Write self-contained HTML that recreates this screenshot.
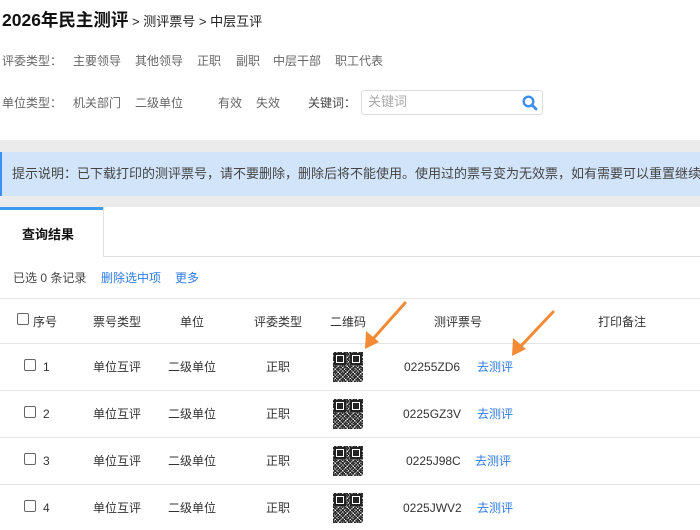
<!DOCTYPE html>
<html><head><meta charset="utf-8"><style>
*{margin:0;padding:0;box-sizing:border-box}
body{width:700px;height:530px;overflow:hidden;background:#fff;font-family:"Liberation Sans","Noto Sans CJK SC",sans-serif;font-size:12px;color:#333;position:relative}
.a{position:absolute;white-space:nowrap;line-height:16px}
.g{color:#666}
.blue{color:#2f7be8}
.qr{position:absolute;width:30px;height:30px;background:
repeating-conic-gradient(#222 0 25%,transparent 0 50%) 0 0/3px 3px,
repeating-conic-gradient(#444 0 25%,#e8e8e8 0 50%) 1px 1px/5px 5px;}
.qr:before,.qr:after{content:"";position:absolute;width:8px;height:8px;border:2px solid #222;background:#fff;box-shadow:inset 0 0 0 1px #fff,inset 0 0 0 4px #222}
.qr:before{left:1px;top:1px}.qr:after{right:1px;top:1px}
.line{position:absolute;left:0;width:700px;height:1px;background:#e4e4e4}
.cb{position:absolute;width:12px;height:12px;border:1px solid #666;border-radius:2px;background:#fff}
</style></head><body>
<div class="a" style="left:2px;top:10px;font-size:17.5px;line-height:20px;font-weight:bold;color:#111">2026年民主测评<span style="font-size:13px;font-weight:normal;color:#222"> &gt; 测评票号 &gt; 中层互评</span></div>
<div class="a g" style="left:2px;top:53px">评委类型：</div>
<div class="a g" style="left:73px;top:53px">主要领导</div>
<div class="a g" style="left:135px;top:53px">其他领导</div>
<div class="a g" style="left:197px;top:53px">正职</div>
<div class="a g" style="left:236px;top:53px">副职</div>
<div class="a g" style="left:273px;top:53px">中层干部</div>
<div class="a g" style="left:335px;top:53px">职工代表</div>
<div class="a g" style="left:2px;top:95px">单位类型：</div>
<div class="a g" style="left:73px;top:95px">机关部门</div>
<div class="a g" style="left:135px;top:95px">二级单位</div>
<div class="a g" style="left:218px;top:95px">有效</div>
<div class="a g" style="left:256px;top:95px">失效</div>
<div class="a" style="left:308px;top:95px;color:#444">关键词：</div>
<div class="a" style="left:361px;top:90px;width:182px;height:25px;border:1px solid #ddd;border-radius:3px"></div>
<div class="a" style="left:368px;top:94px;color:#aaa;font-size:13px">关键词</div>
<svg class="a" style="left:522px;top:95px" width="16" height="16" viewBox="0 0 16 16"><circle cx="6.5" cy="6.5" r="4.8" fill="none" stroke="#3d8ef0" stroke-width="2.4"/><path d="M10 10l4 4" stroke="#3d8ef0" stroke-width="2.8" stroke-linecap="round"/></svg>
<div class="a" style="left:0;top:140px;width:700px;height:67px;background:#ebebeb"></div>
<div class="a" style="left:0;top:152px;width:700px;height:44px;background:#d2e4fa;border-left:2px solid #3d8ef0"></div>
<div class="a" style="left:12px;top:166px;font-size:13px;color:#444">提示说明：已下载打印的测评票号，请不要删除，删除后将不能使用。使用过的票号变为无效票，如有需要可以重置继续</div>
<div class="a" style="left:0;top:207px;width:700px;height:323px;background:#fff"></div>
<div class="a" style="left:0;top:207px;width:103px;height:3px;background:#3d9bf0"></div>
<div class="a" style="left:103px;top:207px;width:1px;height:50px;background:#e0e0e0"></div>
<div class="a" style="left:103px;top:256px;width:597px;height:1px;background:#e0e0e0"></div>
<div class="a" style="left:22px;top:227px;font-size:13px;font-weight:bold;color:#111">查询结果</div>
<div class="a" style="left:13px;top:270px;color:#444">已选 0 条记录</div>
<div class="a blue" style="left:101px;top:270px">删除选中项</div>
<div class="a blue" style="left:175px;top:270px">更多</div>
<div class="line" style="top:298px"></div>
<div class="cb" style="left:17px;top:313px"></div>
<div class="a" style="left:33px;top:314px">序号</div>
<div class="a" style="left:93px;top:314px">票号类型</div>
<div class="a" style="left:180px;top:314px">单位</div>
<div class="a" style="left:254px;top:314px">评委类型</div>
<div class="a" style="left:330px;top:314px">二维码</div>
<div class="a" style="left:434px;top:314px">测评票号</div>
<div class="a" style="left:598px;top:314px">打印备注</div>
<div class="line" style="top:343px"></div>
<div class="line" style="top:390px"></div>
<div class="line" style="top:437px"></div>
<div class="line" style="top:484px"></div>

<div class="cb" style="left:24px;top:359px"></div><div class="a" style="left:43px;top:359px">1</div>
<div class="a" style="left:93px;top:359px">单位互评</div><div class="a" style="left:168px;top:359px">二级单位</div><div class="a" style="left:266px;top:359px">正职</div>
<div class="qr" style="left:333px;top:352px"></div>
<div class="a" style="left:404px;top:359px">02255ZD6</div><div class="a blue" style="left:477px;top:359px">去测评</div>

<div class="cb" style="left:24px;top:406px"></div><div class="a" style="left:43px;top:406px">2</div>
<div class="a" style="left:93px;top:406px">单位互评</div><div class="a" style="left:168px;top:406px">二级单位</div><div class="a" style="left:266px;top:406px">正职</div>
<div class="qr" style="left:333px;top:399px"></div>
<div class="a" style="left:403px;top:406px">0225GZ3V</div><div class="a blue" style="left:477px;top:406px">去测评</div>

<div class="cb" style="left:24px;top:453px"></div><div class="a" style="left:43px;top:453px">3</div>
<div class="a" style="left:93px;top:453px">单位互评</div><div class="a" style="left:168px;top:453px">二级单位</div><div class="a" style="left:266px;top:453px">正职</div>
<div class="qr" style="left:333px;top:446px"></div>
<div class="a" style="left:406px;top:453px">0225J98C</div><div class="a blue" style="left:475px;top:453px">去测评</div>

<div class="cb" style="left:24px;top:500px"></div><div class="a" style="left:43px;top:500px">4</div>
<div class="a" style="left:93px;top:500px">单位互评</div><div class="a" style="left:168px;top:500px">二级单位</div><div class="a" style="left:266px;top:500px">正职</div>
<div class="qr" style="left:333px;top:493px"></div>
<div class="a" style="left:403px;top:500px">0225JWV2</div><div class="a blue" style="left:477px;top:500px">去测评</div>

<svg class="a" style="left:0;top:0" width="700" height="530">
<g stroke="#f38a35" stroke-width="3" fill="#f38a35" stroke-linecap="round">
<line x1="405" y1="303" x2="372" y2="340"/><polygon points="365,349 366,331 379,342" stroke="none"/>
<line x1="553" y1="312" x2="520" y2="347"/><polygon points="512,356 513,338 526,349" stroke="none"/>
</g></svg>
</body></html>
